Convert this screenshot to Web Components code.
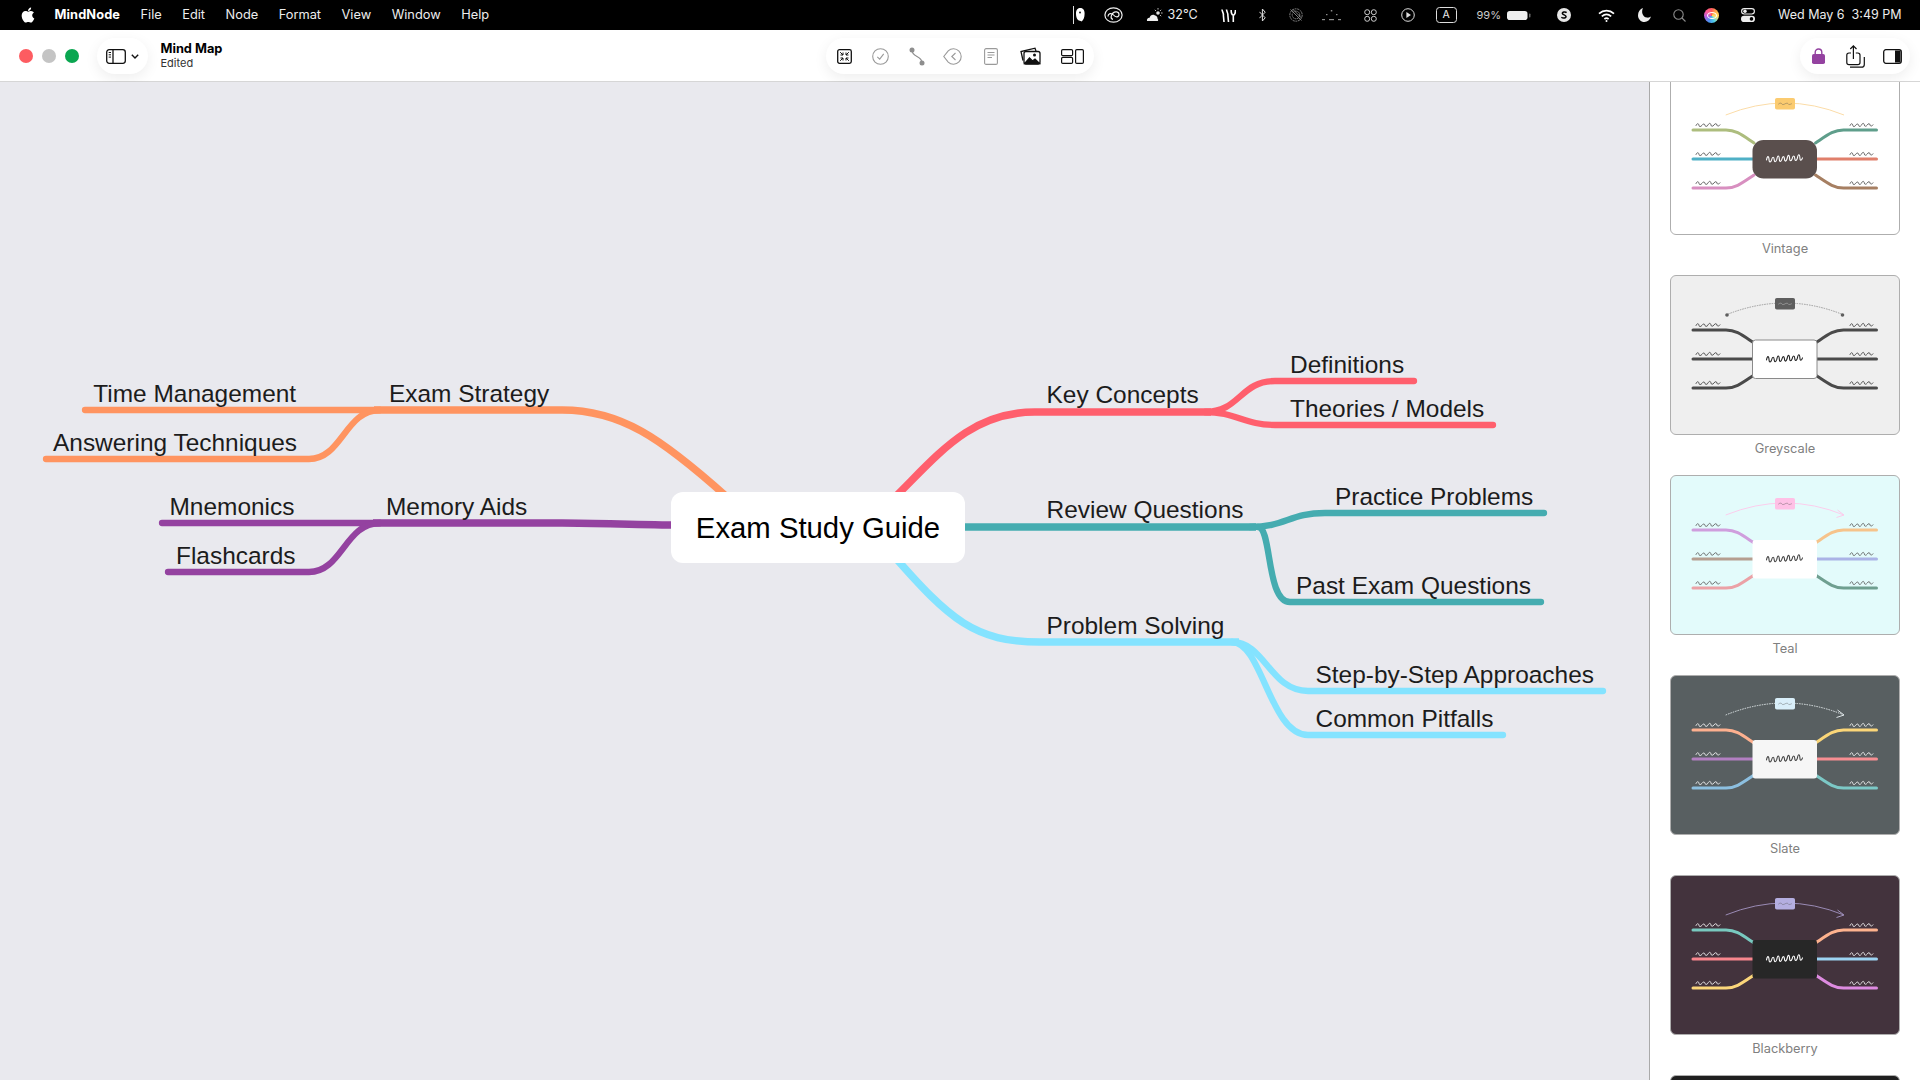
<!DOCTYPE html>
<html>
<head>
<meta charset="utf-8">
<title>MindNode</title>
<style>
  html, body { margin: 0; height: 100%; overflow: hidden; }
  body { font-family: "Inter", "Liberation Sans", sans-serif; }
</style>
</head>
<body>
<app-window>
  <menu-bar slot="top"></menu-bar>
  <tool-bar slot="top" title="Mind Map" status="Edited"></tool-bar>
  <mind-map>
    <root-node>Exam Study Guide</root-node>
    <mind-node x="93.3" y="402">Time Management</mind-node>
    <mind-node x="389" y="402">Exam Strategy</mind-node>
    <mind-node x="53" y="451">Answering Techniques</mind-node>
    <mind-node x="169.500" y="515">Mnemonics</mind-node>
    <mind-node x="386" y="515">Memory Aids</mind-node>
    <mind-node x="176" y="564">Flashcards</mind-node>
    <mind-node x="1046.500" y="403.500">Key Concepts</mind-node>
    <mind-node x="1290" y="373">Definitions</mind-node>
    <mind-node x="1290" y="417">Theories / Models</mind-node>
    <mind-node x="1046.500" y="518.500">Review Questions</mind-node>
    <mind-node x="1335" y="505">Practice Problems</mind-node>
    <mind-node x="1296" y="594.500">Past Exam Questions</mind-node>
    <mind-node x="1046.500" y="634">Problem Solving</mind-node>
    <mind-node x="1315.500" y="683">Step-by-Step Approaches</mind-node>
    <mind-node x="1315.500" y="727">Common Pitfalls</mind-node>
  </mind-map>
  <theme-list slot="side">
    <theme-card name="Vintage" bg="#ffffff" center="#5a4f4d" ink="#444" center-ink="#fff" top="#fbcb70" arc="#fbdca8" left="#adbd7e,#4fb0c6,#d88fc0" right="#5f9e8b,#e07f6b,#a67f62" radius="11"></theme-card>
    <theme-card name="Greyscale" bg="#efefef" center="#ffffff" ink="#333" center-ink="#222" top="#5e5e5e" arc="#9a9a9a" left="#4a4a4a,#4a4a4a,#4a4a4a" right="#4a4a4a,#4a4a4a,#4a4a4a" radius="3" outline="#8a8a8a" arc-style="dots"></theme-card>
    <theme-card name="Teal" bg="#e3fbfb" center="#ffffff" ink="#555" center-ink="#444" top="#ffc0e6" arc="#fbcdec" left="#cf9edd,#b59e90,#eba1a6" right="#f6c38b,#aab3e6,#6f9f90" radius="3" arc-style="arrow"></theme-card>
    <theme-card name="Slate" bg="#585f61" center="#f6f6f6" ink="#fff" center-ink="#444" top="#d9effa" arc="#dfe6e8" left="#fdb08f,#b27fc2,#8cbfe0" right="#fbd678,#f78e92,#7cc8c6" radius="3" arc-style="dash-arrow"></theme-card>
    <theme-card name="Blackberry" bg="#43333d" center="#272727" ink="#fff" center-ink="#fff" top="#b4aee0" arc="#9a8bb5" left="#78c9bf,#f8868d,#fbd67a" right="#fdb28e,#9cd3f2,#dd8be0" radius="3" arc-style="arrow"></theme-card>
    <theme-card bg="#1f1f1f" center="#333" ink="#fff" center-ink="#fff" top="#777" arc="#777" left="#777,#777,#777" right="#777,#777,#777" radius="3"></theme-card>
  </theme-list>
</app-window>

<script>
class AppWindow extends HTMLElement {
  constructor() {
    super()
    this.attachShadow({ mode: "open" }).innerHTML = `
    <style>
      :host { display: flex; flex-direction: column; width: 1920px; height: 1080px; overflow: hidden; background: #e9e9ee; }
      .body { flex: 1; min-height: 0; display: grid; grid-template-columns: 1649px 271px; }
    </style>
    <slot name="top"></slot>
    <div class="body">
      <slot></slot>
      <slot name="side"></slot>
    </div>`
  }
}

class MenuBar extends HTMLElement {
  constructor() {
    super()
    this.attachShadow({ mode: "open" }).innerHTML = `
    <style>
      :host { display: flex; align-items: center; height: 30px; background: #000; color: #ededed; font: 400 12.800px/30px "Inter", "Liberation Sans", sans-serif; padding: 0 20px 0 17.500px; box-sizing: border-box; }
      svg { display: block; flex: none; }
      .apps { display: flex; gap: 20.500px; margin-left: 17px; align-items: center; }
      b { font-weight: 700; color: #fff; letter-spacing: .1px; }
      .status { margin-left: auto; display: flex; align-items: center; }
      .t { flex: none; white-space: nowrap; }
      .dim { opacity: .55; }
    </style>
    <svg width="20" height="20" viewBox="0 0 24 24" fill="#fff"><path d="M17.05 20.28c-.98.95-2.05.8-3.08.35-1.09-.46-2.09-.48-3.24 0-1.44.62-2.2.44-3.06-.35C2.79 15.25 3.51 7.59 9.05 7.31c1.35.07 2.29.74 3.08.8 1.18-.24 2.31-.93 3.57-.84 1.51.12 2.65.72 3.4 1.8-3.12 1.87-2.38 5.98.48 7.13-.57 1.5-1.31 2.99-2.54 4.09l.01-.01zM12.03 7.25c-.15-2.23 1.66-4.07 3.74-4.25.29 2.58-2.34 4.5-3.74 4.25z"/></svg>
    <div class="apps">
      <b>MindNode</b><span>File</span><span>Edit</span><span>Node</span><span>Format</span><span>View</span><span>Window</span><span>Help</span>
    </div>
    <div class="status">
      <svg width="12" height="18" viewBox="0 0 12 18"><path d="M.5 0V18" stroke="#ddd" stroke-width="1"/><path d="M3 7.500C3 3.500 5 2 7.300 2S11.600 3.500 11.600 7.500C11.600 11.500 10.500 14 8.500 15.500 7.500 14.600 6 15 5 14 3.600 12.500 3 10.500 3 7.500Z" fill="#fff"/><circle cx="7" cy="6.500" r=".9" fill="#000"/></svg>
      <svg style="margin-left:19px" width="19" height="16" viewBox="0 0 19 16" fill="none" stroke="#eee" stroke-width="1.200"><ellipse cx="9.500" cy="8" rx="8.600" ry="7.200"/><path d="M4 9.500C4 6.500 7.500 5.500 9.500 8S15 10.500 15 7.500 11 4 9 6 6 12 9 12.300"/></svg>
      <svg style="margin-left:23px" width="17" height="14" viewBox="0 0 17 14"><path d="M1 13C.5 11 2 9.600 3.600 9.800 4.200 7.400 6.500 6.200 8.600 7.200 10.400 7.600 11.800 9.200 11.600 11 12.400 11.400 12.400 12.800 11.600 13Z" fill="#eee"/><circle cx="12" cy="5" r="1.800" fill="#ddd"/><path d="M12 0V1.600M16.600 5H15M15.200 1.800 14 3M15.200 8.200 14 7M8.800 1.800 10 3" stroke="#ccc" stroke-width=".9"/></svg>
      <span class="t" style="margin-left:4.500px;width:30px;font-size:12.600px">32°C</span>
      <svg style="margin-left:23px" width="15" height="15" viewBox="0 0 15 15" fill="none" stroke="#fff" stroke-width="1.600"><path d="M1 1.500C1.200 4 2.800 5 2.400 7.500L3 14"/><path d="M5.500 1.500C5.700 4 7.200 5 6.900 7.500L7.500 14"/><path d="M10.200 2C10 5 11 7 12.300 7S14.600 5 14.400 2M12.300 7V14" /></svg>
      <svg style="margin-left:23px" width="7" height="14" viewBox="0 0 7 14" fill="none" stroke="#ddd" stroke-width="1"><path d="M.4 3.800 6.200 9.800 3.400 13V1L6.200 4.200.4 10.200"/></svg>
      <svg class="dim" style="margin-left:23px" width="14" height="14" viewBox="0 0 14 14" fill="none" stroke="#fff" stroke-width=".9"><circle cx="7" cy="7" r="6.200" stroke-dasharray="2 .7"/><circle cx="7" cy="7" r="3.800" stroke-dasharray="2 .7"/><path d="M1.500 1.500 12.500 12.500M4 1.500 12.500 10"/></svg>
      <svg class="dim" style="margin-left:19px" width="19" height="12" viewBox="0 0 19 12" fill="#fff"><rect x="8.800" y="1" width="1.500" height="1.500"/><rect x="4" y="5" width="1.500" height="1.200"/><rect x="14" y="5" width="1.500" height="1.200"/><rect x="0" y="10" width="3" height="1.200"/><rect x="7" y="10" width="5" height="1.200"/><rect x="16" y="10" width="3" height="1.200"/></svg>
      <svg style="margin-left:23px" width="13" height="13" viewBox="0 0 13 13" fill="none" stroke="#ccc" stroke-width="1"><circle cx="3.200" cy="3.200" r="2.500"/><circle cx="9.800" cy="3.200" r="2.500"/><circle cx="3.200" cy="9.800" r="2.500"/><circle cx="9.800" cy="9.800" r="2.500"/></svg>
      <svg style="margin-left:24px" width="14" height="14" viewBox="0 0 14 14"><circle cx="7" cy="7" r="6.300" fill="none" stroke="#ddd" stroke-width="1"/><path d="M5.400 4V10L10 7Z" fill="#ddd"/></svg>
      <span class="t" style="margin-left:21px;width:19px;height:14px;border:1px solid #ddd;border-radius:3.500px;font-size:10.500px;line-height:14px;text-align:center">A</span>
      <span class="t" style="margin-left:20px;width:24px;font-size:11px;color:#ccc">99%</span>
      <svg style="margin-left:6.500px" width="24" height="9" viewBox="0 0 24 9"><rect x="0" y="0" width="20.500" height="9" rx="2.800" fill="#eee"/><rect x="22" y="2.500" width="1.500" height="4" rx=".7" fill="#666"/></svg>
      <svg style="margin-left:26px" width="14" height="14" viewBox="0 0 14 14"><circle cx="7" cy="7" r="7" fill="#e6e6e6"/><path d="M9.600 4.600C8.300 3.400 5 4 5.400 5.600 5.800 7 8.600 6.800 9 8.400 9.300 10 6 10.600 4.400 9.200" fill="none" stroke="#000" stroke-width="1.500"/></svg>
      <svg style="margin-left:27px" width="17" height="13" viewBox="0 0 17 13" fill="none" stroke="#fff" stroke-width="1.700"><path d="M1 4.600C5.400.6 11.600.6 16 4.600"/><path d="M3.800 7.400C6.600 5 10.400 5 13.200 7.400"/><path d="M6.400 10C7.600 9 9.400 9 10.600 10"/><path d="M8.500 12 8.500 12" stroke-linecap="round" stroke-width="2"/></svg>
      <svg style="margin-left:23px" width="13" height="14" viewBox="0 0 13 14"><path d="M5 0C3 4 4.500 9 9 9.600 10.500 9.800 12 9.400 13 8.600 12 12 9.500 14 6.500 14 2.800 14 0 11 0 7.200 0 3.800 2 1 5 0Z" fill="#eee"/></svg>
      <svg class="dim" style="margin-left:22px" width="13" height="13" viewBox="0 0 13 13" fill="none" stroke="#fff" stroke-width="1.100"><circle cx="5.500" cy="5.500" r="4.700"/><path d="M9 9 12.500 12.500"/></svg>
      <span class="t" style="margin-left:18px;width:15px;height:15px;border-radius:50%;background:conic-gradient(#ff5a5f,#ffb347,#ffe36e,#4fd0e8,#4a90f0,#b65fe0,#ff5a9a,#ff5a5f);display:grid;place-items:center"><span style="width:8px;height:5px;border:1.400px solid #fff;border-radius:50%"></span></span>
      <svg style="margin-left:22px" width="14" height="14" viewBox="0 0 14 14"><rect x=".6" y=".6" width="12.800" height="5.400" rx="2.700" fill="none" stroke="#eee" stroke-width="1.100"/><circle cx="4" cy="3.300" r="1.700" fill="#eee"/><rect y="7.800" width="14" height="6.200" rx="3.100" fill="#eee"/><circle cx="10.500" cy="10.900" r="1.800" fill="#000"/></svg>
      <span class="t" style="margin-left:23px;width:122px;font-size:12.500px">Wed May 6&nbsp; 3:49 PM</span>
    </div>`
  }
}

class ToolBar extends HTMLElement {
  constructor() {
    super()
    this.attachShadow({ mode: "open" }).innerHTML = `
    <style>
      :host { display: grid; grid-template-columns: 826px 268px 1fr 110px 10px; align-items: center; height: 52px; background: #fff; border-bottom: 1px solid #d6d6d6; box-sizing: border-box; padding-top: 1px; color: #000; }
      .left { display: flex; align-items: center; }
      .lights { display: flex; gap: 9px; margin-left: 19px; }
      .lights i { width: 14px; height: 14px; border-radius: 50%; display: block; }
      .pill { display: flex; align-items: center; height: 36px; border-radius: 18px; background: #fff; box-shadow: 0 4px 14px rgba(0,0,0,.07); box-sizing: border-box; }
      .side { width: 51px; margin-left: 18px; padding-left: 8.500px; gap: 5px; }
      .doc { margin-left: 12.500px; margin-top: -1px; font: 700 12.800px/15px "Inter", "Liberation Sans", sans-serif; }
      .doc small { display: block; font-weight: 400; font-size: 11px; line-height: 14px; color: #333; }
      svg { display: block; flex: none; }
      .right { grid-column: 4; }
    </style>
    <div class="left">
      <div class="lights"><i style="background:#fd5c61"></i><i style="background:#c4c4c4"></i><i style="background:#0aa650"></i></div>
      <div class="pill side">
        <svg width="20" height="15" viewBox="0 0 20 15" fill="none" stroke="#111" stroke-width="1.300"><rect x=".7" y=".7" width="18.600" height="13.600" rx="2.500"/><path d="M7 .7V14.300"/><path d="M2.700 3.500H5M2.700 5.800H5M2.700 8.100H5" stroke-width="1"/></svg>
        <svg width="8" height="5" viewBox="0 0 8 5" fill="none" stroke="#111" stroke-width="1.400"><path d="M.8.800 4 4 7.200.8"/></svg>
      </div>
      <div class="doc">${this.getAttribute("title")}<small>${this.getAttribute("status")}</small></div>
    </div>
    <div class="pill">
      <svg style="margin-left:10.500px" width="15" height="15" viewBox="0 0 15 15" fill="none" stroke="#111"><rect x=".7" y=".7" width="13.600" height="13.600" rx="1.800" stroke-width="1.300"/><path d="M3.200 3.200 6 6M6 3.500V6H3.500M11.800 3.200 9 6M9 3.500V6H11.500M3.200 11.800 6 9M6 11.500V9H3.500M11.800 11.800 9 9M9 11.500V9H11.500" stroke-width="1"/></svg>
      <svg style="margin-left:20.500px" width="17" height="17" viewBox="0 0 17 17" fill="none" stroke="#9a9a9a" stroke-width="1.100"><circle cx="8.500" cy="8.500" r="7.800"/><path d="M5.300 8.800 7.700 11.200 11.700 5.800"/></svg>
      <svg style="margin-left:20px" width="16" height="19" viewBox="0 0 16 19" fill="none" stroke="#8e8e8e" stroke-width="1.200"><circle cx="3" cy="3" r="2.500" fill="#8e8e8e" stroke="none"/><circle cx="13" cy="16" r="2.500" fill="#8e8e8e" stroke="none"/><path d="M3 3C3 11 13 8 13 16"/></svg>
      <svg style="margin-left:18px" width="20" height="17" viewBox="0 0 20 17" fill="none" stroke="#9a9a9a" stroke-width="1.100"><path d="M5.200 2.900A7.700 7.700 0 1 1 5.200 14.100L.8 8.500Z"/><path d="M12.500 5 8.800 8.500 12.500 12"/></svg>
      <svg style="margin-left:21px" width="14" height="17" viewBox="0 0 14 17" fill="none" stroke="#9a9a9a" stroke-width="1.100"><rect x=".6" y=".6" width="12.800" height="15.800" rx="1.500"/><path d="M3.500 4.500H10.500M3.500 7H10.500M3.500 9.500H8"/></svg>
      <svg style="margin-left:21.500px" width="21" height="18" viewBox="0 0 21 18" fill="none" stroke="#111" stroke-width="1.300"><path d="M3 13.500 1 4.500 15 1.200 16 4"/><rect x="4" y="4.500" width="16" height="12.500" rx="2"/><path d="M4.700 16.500 9.500 11 12.500 14 15 12 19.500 16.500Z" fill="#111"/><circle cx="14.500" cy="8" r="1.500" fill="#111" stroke="none"/></svg>
      <svg style="margin-left:20px" width="23" height="15" viewBox="0 0 23 15" fill="none" stroke="#111" stroke-width="1.200"><rect x=".6" y=".6" width="11" height="6" rx="1.200"/><rect x=".6" y="8.400" width="11" height="6" rx="1.200"/><rect x="14.600" y=".6" width="7.800" height="13.800" rx="1.200"/></svg>
    </div>
    <div class="pill right">
      <svg style="margin-left:11.500px" width="13" height="16" viewBox="0 0 13 16"><path d="M3.200 7V4.300a3.300 3.300 0 0 1 6.600 0V7" fill="none" stroke="#9442a0" stroke-width="1.400"/><rect y="6" width="13" height="10" rx="1.800" fill="#9442a0"/></svg>
      <svg style="margin-left:21px" width="19" height="23" viewBox="0 0 19 23" fill="none" stroke="#111" stroke-width="1.200"><path d="M5 8H3A2.200 2.200 0 0 0 .8 10.200V17.500A2.200 2.200 0 0 0 3 19.700H11.800A2.200 2.200 0 0 0 14 17.500V10.200A2.200 2.200 0 0 0 11.800 8H9.800"/><path d="M7.400 14V1M4.300 4 7.400 .9 10.500 4"/><path d="M4 22.200H15.500A2.800 2.800 0 0 0 18.300 19.400V12"/></svg>
      <svg style="margin-left:18px" width="19" height="15" viewBox="0 0 19 15"><rect x=".7" y=".7" width="17.600" height="13.600" rx="2.200" fill="none" stroke="#111" stroke-width="1.300"/><rect x="12" y="1.500" width="5.500" height="12" fill="#111"/></svg>
    </div>`
  }
}

class MindMap extends HTMLElement {
  constructor() {
    super()
    this.attachShadow({ mode: "open" }).innerHTML = `
    <style>
      :host { display: block; position: relative; background: #e9e9ee; overflow: hidden; }
      svg { position: absolute; left: 0; top: 0; }
      path { fill: none; stroke-linecap: round; }
      .m { stroke-width: 7.500; stroke-linecap: butt; }
      .s { stroke-width: 6.300; }
    </style>
    <svg width="1649" height="998" viewBox="0 82 1649 998">
      <g stroke="#ff9460">
        <path class="s" d="M85 410H380"/>
        <path class="s" d="M46 459H309C342 459 345 410 380 410"/>
        <path class="m" d="M374 410H562C620 410 660 437 727 497"/>
      </g>
      <g stroke="#9442a0">
        <path class="s" d="M162 523H380"/>
        <path class="s" d="M168 572H309C342 572 345 523 380 523"/>
        <path class="m" d="M373 523H562C600 523 640 525 680 525"/>
      </g>
      <g stroke="#ff5f6d">
        <path class="s" d="M1205 412C1240 412 1240 381 1275 381H1414"/>
        <path class="s" d="M1205 412C1235 412 1245 425 1275 425H1493"/>
        <path class="m" d="M893 499C938 455 970 412 1035 412H1211"/>
      </g>
      <g stroke="#45acb0">
        <path class="s" d="M1250 527C1285 527 1290 513 1325 513H1544"/>
        <path class="s" d="M1258 527C1272 527 1266 602 1290 602H1541"/>
        <path class="m" d="M960 527H1256"/>
      </g>
      <g stroke="#84e3ff">
        <path class="s" d="M1232 642C1265 642 1270 691 1308 691H1603"/>
        <path class="s" d="M1232 642C1262 642 1270 735 1308 735H1503"/>
        <path class="m" d="M893 555C950 620 975 642 1040 642H1239"/>
      </g>
    </svg>
    <slot></slot>`
  }
}

class RootNode extends HTMLElement {
  constructor() {
    super()
    this.attachShadow({ mode: "open" }).innerHTML = `
    <style>
      :host { position: absolute; left: 671px; top: 410px; width: 294px; height: 71px; display: flex; align-items: center; justify-content: center; background: #fff; border-radius: 12px; color: #000; font: 29.300px/35px "Liberation Sans", Arial, sans-serif; }
    </style>
    <slot></slot>`
  }
}

// x and y are the page coordinates of the label's left edge and baseline
class MindNode extends HTMLElement {
  constructor() {
    super()
    this.attachShadow({ mode: "open" }).innerHTML = `
    <style>
      :host { position: absolute; white-space: nowrap; color: #1c1c1c; font: 24.450px/28px "Liberation Sans", Arial, sans-serif; }
    </style>
    <slot></slot>`
  }
  connectedCallback() {
    this.style.left = this.getAttribute("x") + "px"
    this.style.top = (this.getAttribute("y") - 82 - 22.500) + "px"
  }
}

class ThemeList extends HTMLElement {
  constructor() {
    super()
    this.attachShadow({ mode: "open" }).innerHTML = `
    <style>
      :host { display: block; background: #fff; border-left: 1px solid #aaa; overflow: hidden; box-sizing: border-box; }
      .scroll { margin-top: -7px; padding: 0 20px; display: flex; flex-direction: column; }
    </style>
    <div class="scroll"><slot></slot></div>`
  }
}

// scribble that stands in for the node titles in a theme preview
const squiggle = (x, y, w, h, color, sw) => {
  const n = Math.round(w / 5.500), dx = w / n
  let d = `M${x} ${y}`
  for (let i = 0; i < n; i++) {
    const up = h * (i % 2 ? 1.100 : 1.500)
    d += `c${dx * .15} ${-up} ${dx * .45} ${-up} ${dx * .5} 0`
    d += `c${dx * .03} ${h * .9} ${dx * .3} ${h * .9} ${dx * .5} ${-h * .1}`
  }
  return `<path d="${d}" fill="none" stroke="${color}" stroke-width="${sw}" stroke-linecap="round" stroke-linejoin="round"/>`
}

class ThemeCard extends HTMLElement {
  constructor() {
    super()
    this.attachShadow({ mode: "open" })
  }
  connectedCallback() {
    const get = (n) => this.getAttribute(n)
    const left = get("left").split(","), right = get("right").split(",")
    const arcStyle = get("arc-style") || ""
    const dashed = arcStyle == "dots" || arcStyle == "dash-arrow"
    const ink = get("ink"), ys = [55, 84, 113]
    const leftPaths = [
      "M23 55H56C66 55 72 60 84 68",
      "M23 84H84",
      "M23 113H56C66 113 72 108 84 100",
    ]
    const rightPaths = [
      "M206.500 55H173.500C163.500 55 157.500 60 145.500 68",
      "M206.500 84H145.500",
      "M206.500 113H173.500C163.500 113 157.500 108 145.500 100",
    ]
    const branches = leftPaths.map((d, i) => `<path d="${d}" stroke="${left[i]}"/>`).join("")
      + rightPaths.map((d, i) => `<path d="${d}" stroke="${right[i]}"/>`).join("")
    const inks = ys.map((y) => squiggle(26, y - 4.500, 24, 1.600, ink, .8) + squiggle(180, y - 4.500, 23, 1.600, ink, .8)).join("")
    let ends = ""
    if (arcStyle == "dots") {
      ends = `<circle cx="57" cy="40" r="1.800" fill="#5e5e5e"/><circle cx="172.500" cy="40" r="1.800" fill="#5e5e5e"/>`
    } else if (arcStyle.includes("arrow")) {
      ends = `<path d="M167.500 35 174 40 166.500 42.500" fill="none" stroke="${get("arc")}" stroke-width="1"/>`
    }
    const outline = get("outline") ? `stroke="${get("outline")}" stroke-width="1"` : ""
    this.shadowRoot.innerHTML = `
    <style>
      :host { display: block; flex: none; height: 200px; }
      .card { width: 230px; height: 160px; box-sizing: border-box; border: 1px solid #aeaeae; border-radius: 6px; overflow: hidden; }
      svg { display: block; margin: -1px; }
      .label { text-align: center; color: #808080; font: 12.800px/27px "Inter", "Liberation Sans", sans-serif; height: 27px; }
      .branch path { fill: none; stroke-width: 3; stroke-linecap: round; }
    </style>
    <div class="card" style="background:${get("bg")}">
      <svg width="230" height="160" viewBox="0 0 230 160">
        <path d="M55.700 40Q115 16 174 40" fill="none" stroke="${get("arc")}" stroke-width="1" ${dashed ? 'stroke-dasharray="1.500 1"' : ""}/>
        ${ends}
        <g class="branch">${branches}</g>
        ${inks}
        <rect x="82.500" y="65" width="64.500" height="38.500" rx="${get("radius")}" fill="${get("center")}" ${outline}/>
        ${squiggle(96.500, 85, 36, 3, get("center-ink"), 1.100)}
        <rect x="105" y="23" width="20" height="11.500" rx="1.800" fill="${get("top")}"/>
        ${squiggle(108.500, 29, 13, .8, arcStyle == "dots" ? "#ddd" : "#555", .4)}
      </svg>
    </div>
    <div class="label">${get("name") || ""}</div>`
  }
}

customElements.define("app-window", AppWindow)
customElements.define("menu-bar", MenuBar)
customElements.define("tool-bar", ToolBar)
customElements.define("mind-map", MindMap)
customElements.define("root-node", RootNode)
customElements.define("mind-node", MindNode)
customElements.define("theme-list", ThemeList)
customElements.define("theme-card", ThemeCard)
</script>
</body>
</html>
